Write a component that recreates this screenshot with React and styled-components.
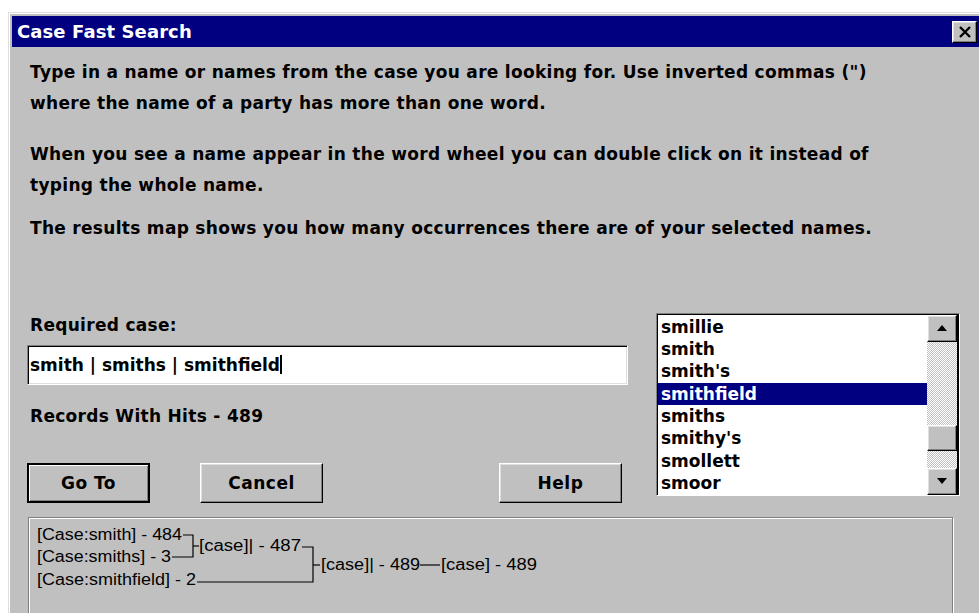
import React from 'react';
import styled, { createGlobalStyle } from 'styled-components';

const GlobalStyle = createGlobalStyle`
  html, body {
    margin: 0;
    padding: 0;
    background: #fff;
    overflow: hidden;
  }
  body {
    font-family: "DejaVu Sans", "Liberation Sans", Arial, sans-serif;
  }
`;

const Desktop = styled.div`
  width: 979px;
  height: 613px;
  overflow: hidden;
  box-sizing: border-box;
  padding: 12px 0 0 8px;
  background: #fff;
`;

const Window = styled.div`
  width: 976px;
  height: 660px;
  box-sizing: border-box;
  background: #c0c0c0;
  border-style: solid;
  border-width: 1px;
  border-color: #dfdfdf #000 #000 #dfdfdf;
  box-shadow: inset 1px 1px #fff, inset -1px -1px #808080;
  padding: 3px;
  display: flex;
  flex-direction: column;
`;

const TitleBar = styled.div`
  height: 31px;
  flex: none;
  background: #000080;
  display: flex;
  align-items: center;
  justify-content: space-between;
  padding: 0 3px 0 5px;
`;

const Title = styled.span`
  color: #fff;
  font-weight: bold;
  font-size: 18px;
  letter-spacing: 0.1px;
`;

const Bevel = `
  background: #c0c0c0;
  border-style: solid;
  border-width: 1px;
  border-color: #fff #000 #000 #fff;
  box-shadow: inset -1px -1px #808080, inset 1px 1px #dfdfdf;
  box-sizing: border-box;
`;

const CloseButton = styled.div`
  ${Bevel}
  width: 25px;
  height: 22px;
  display: flex;
  align-items: center;
  justify-content: center;
`;

const Body = styled.div`
  padding: 10px 0 0 15px;
  display: flex;
  flex-direction: column;
`;

const Para = styled.p`
  margin: ${(p) => p.$top || 0}px 0 0 0;
  padding-left: 3px;
  font-weight: bold;
  font-size: 17px;
  letter-spacing: 0.3px;
  line-height: 30.5px;
  color: #000;
`;

const LowerRow = styled.div`
  display: flex;
  margin-top: 66px;
`;

const LeftCol = styled.div`
  width: 601px;
  display: flex;
  flex-direction: column;
`;

const Label = styled.div`
  margin-top: ${(p) => p.$top || 0}px;
  padding-left: 3px;
  font-weight: bold;
  font-size: 17px;
  letter-spacing: 0.3px;
  line-height: 30px;
`;

const TextField = styled.div`
  margin-top: 5px;
  height: 40px;
  box-sizing: border-box;
  background: #fff;
  border-style: solid;
  border-width: 1px;
  border-color: #808080 #fff #fff #808080;
  box-shadow: inset 1px 1px #000, inset -1px -1px #dfdfdf;
  padding-left: 2px;
  display: flex;
  align-items: center;
  font-weight: bold;
  font-size: 17px;
`;

const Caret = styled.span`
  display: inline-block;
  width: 2px;
  height: 19px;
  background: #000;
`;

const ButtonRow = styled.div`
  margin-top: 32px;
  display: flex;
`;

const Button = styled.div`
  ${Bevel}
  width: 123px;
  height: 40px;
  margin-left: ${(p) => p.$gap || 0}px;
  display: flex;
  align-items: center;
  justify-content: center;
  font-weight: bold;
  font-size: 17px;
  letter-spacing: 0.5px;
  ${(p) =>
    p.$default &&
    `
    border: 2px solid #000;
    box-shadow: inset 1px 1px #fff, inset -1px -1px #808080;
  `}
`;

const ListBox = styled.div`
  margin: 3px 0 0 28px;
  width: 304px;
  height: 183px;
  box-sizing: border-box;
  background: #fff;
  border-style: solid;
  border-width: 1px;
  border-color: #808080 #fff #fff #808080;
  box-shadow: inset 1px 1px #000;
  padding: 1px 0 0 1px;
  display: flex;
`;

const Items = styled.div`
  flex: 1;
  padding-top: 1px;
  display: flex;
  flex-direction: column;
`;

const Item = styled.div`
  height: 22.4px;
  line-height: 22.4px;
  padding-left: 3px;
  font-weight: bold;
  font-size: 17px;
  color: ${(p) => (p.$selected ? '#fff' : '#000')};
  background: ${(p) => (p.$selected ? '#000080' : 'transparent')};
`;

const ScrollBar = styled.div`
  width: 30px;
  display: flex;
  flex-direction: column;
  border-right: 2px solid #000;
`;

const ScrollButton = styled.div`
  ${Bevel}
  height: 27px;
  flex: none;
  display: flex;
  align-items: center;
  justify-content: center;
`;

const Track = styled.div`
  flex: 1;
  display: flex;
  flex-direction: column;
  background-color: #c0c0c0;
  background-image: repeating-conic-gradient(#fff 0 25%, #c0c0c0 0 50%);
  background-size: 2px 2px;
`;

const Thumb = styled.div`
  ${Bevel}
  height: 26px;
  margin-top: 83px;
`;

const ResultsMap = styled.div`
  margin: 14px 0 0 1px;
  width: 925px;
  height: 120px;
  box-sizing: border-box;
  border: 1px solid #808080;
  box-shadow: inset 1px 1px #fff, 1px 1px #fff;
`;

const MapSvg = styled.svg`
  display: block;
  font-family: "Liberation Sans", Arial, sans-serif;
  font-size: 16px;
`;

const words = ['smillie', 'smith', "smith's", 'smithfield', 'smiths', "smithy's", 'smollett', 'smoor'];

// Tree of search terms, in page coordinates offset by the map's origin.
const OX = 29;
const OY = 518;
const labels = [
  { x: 37, y: 540, w: 145, t: '[Case:smith] - 484' },
  { x: 37, y: 562, w: 134, t: '[Case:smiths] - 3' },
  { x: 37, y: 585, w: 159, t: '[Case:smithfield] - 2' },
  { x: 199, y: 551, w: 102, t: '[case]| - 487' },
  { x: 321, y: 570, w: 99, t: '[case]| - 489' },
  { x: 441, y: 570, w: 96, t: '[case] - 489' },
];
const links = [
  'M183 535H193V557H172',
  'M193 546H199',
  'M302 547H313V582H197',
  'M313 565H320',
  'M420 565H440',
];

function ResultsTree() {
  return (
    <MapSvg width="923" height="118" viewBox={`${OX} ${OY} 923 118`}>
      {links.map((d) => (
        <path key={d} d={d} fill="none" stroke="#000" strokeWidth="1.2" />
      ))}
      {labels.map((l) => (
        <text key={l.t} x={l.x} y={l.y} textLength={l.w} lengthAdjust="spacingAndGlyphs" fill="#000">
          {l.t}
        </text>
      ))}
    </MapSvg>
  );
}

const Arrow = ({ up }) => (
  <svg width="12" height="8" viewBox="0 0 12 8">
    <path d={up ? 'M6 1L11 7H1Z' : 'M1 1H11L6 7Z'} fill="#000" />
  </svg>
);

export default function App() {
  return (
    <>
      <GlobalStyle />
      <Desktop>
        <Window>
          <TitleBar>
            <Title>Case Fast Search</Title>
            <CloseButton>
              <svg width="14" height="12" viewBox="0 0 14 12">
                <path d="M2 1L12 11M12 1L2 11" stroke="#000" strokeWidth="2.4" />
              </svg>
            </CloseButton>
          </TitleBar>
          <Body>
            <Para>
              Type in a name or names from the case you are looking for. Use inverted commas (")
              <br />
              where the name of a party has more than one word.
            </Para>
            <Para $top={21}>
              When you see a name appear in the word wheel you can double click on it instead of
              <br />
              typing the whole name.
            </Para>
            <Para $top={13}>
              The results map shows you how many occurrences there are of your selected names.
            </Para>
            <LowerRow>
              <LeftCol>
                <Label>Required case:</Label>
                <TextField>
                  smith | smiths | smithfield
                  <Caret />
                </TextField>
                <Label $top={16}>Records With Hits - 489</Label>
                <ButtonRow>
                  <Button $default>Go To</Button>
                  <Button $gap={50}>Cancel</Button>
                  <Button $gap={176}>Help</Button>
                </ButtonRow>
              </LeftCol>
              <ListBox>
                <Items>
                  {words.map((w) => (
                    <Item key={w} $selected={w === 'smithfield'}>
                      {w}
                    </Item>
                  ))}
                </Items>
                <ScrollBar>
                  <ScrollButton>
                    <Arrow up />
                  </ScrollButton>
                  <Track>
                    <Thumb />
                  </Track>
                  <ScrollButton>
                    <Arrow />
                  </ScrollButton>
                </ScrollBar>
              </ListBox>
            </LowerRow>
            <ResultsMap>
              <ResultsTree />
            </ResultsMap>
          </Body>
        </Window>
      </Desktop>
    </>
  );
}
